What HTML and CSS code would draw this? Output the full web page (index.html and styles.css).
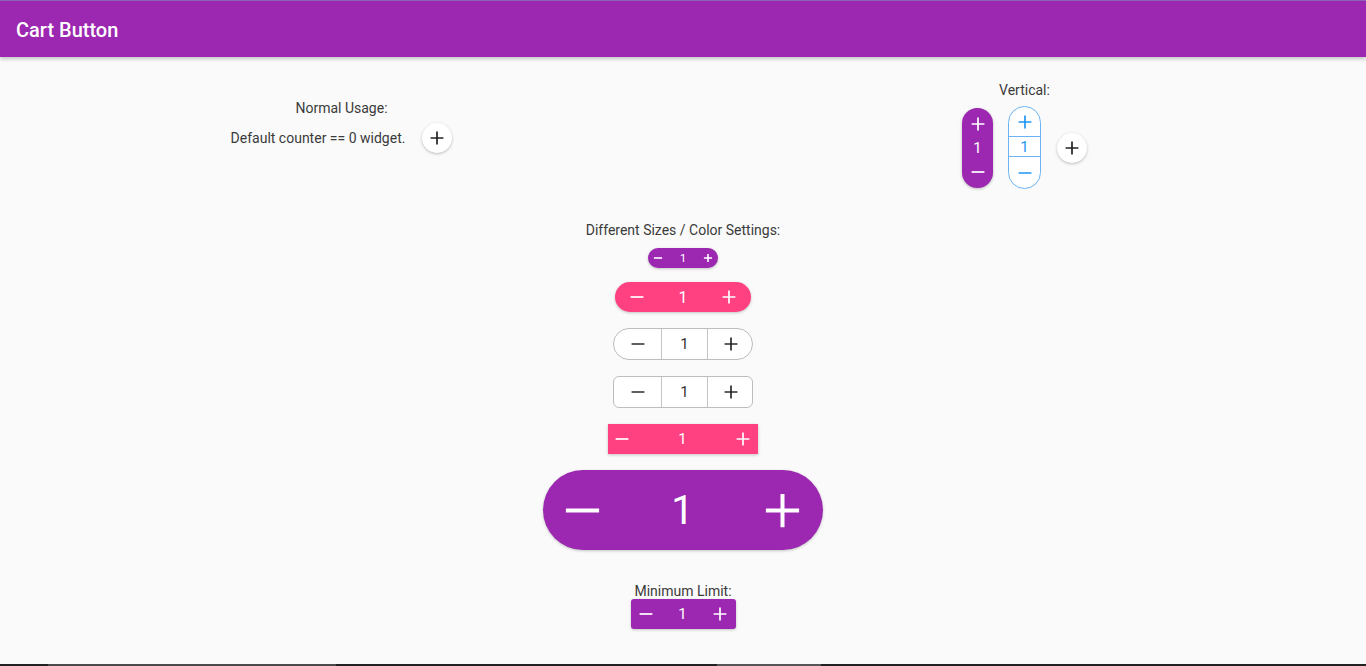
FILE: index.html
```html
<!DOCTYPE html>
<html>
<head>
<meta charset="utf-8">
<link rel="stylesheet" href="styles.css">
</head>
<body>
<div class="app">
  <header class="appbar"><span class="title">Cart Button</span></header>
  <main class="content">
    <section class="top-row">
      <div class="col col-left">
        <div class="label">Normal Usage:</div>
        <div class="normal-row">
          <span class="label">Default counter == 0 widget.</span>
          <button class="fab-add"><svg class="ic ic-md" viewBox="0 0 24 24"><path d="M5 12h14M12 5v14"/></svg></button>
        </div>
      </div>
      <div class="col col-right">
        <div class="label">Vertical:</div>
        <div class="vertical-row">
          <div class="vcounter vc-purple">
            <svg class="ic ic-md" viewBox="0 0 24 24"><path d="M5 12h14M12 5v14"/></svg>
            <span class="num">1</span>
            <svg class="ic ic-md" viewBox="0 0 24 24"><path d="M5 12h14"/></svg>
          </div>
          <div class="vcounter vc-outline">
            <div class="vcell vcell-top"><svg class="ic ic-md" viewBox="0 0 24 24"><path d="M5 12h14M12 5v14"/></svg></div>
            <div class="vcell vcell-mid"><span class="num">1</span></div>
            <div class="vcell vcell-bot"><svg class="ic ic-md" viewBox="0 0 24 24"><path d="M5 12h14"/></svg></div>
          </div>
          <button class="fab-add"><svg class="ic ic-md" viewBox="0 0 24 24"><path d="M5 12h14M12 5v14"/></svg></button>
        </div>
      </div>
    </section>

    <section class="sizes">
      <div class="label">Different Sizes / Color Settings:</div>

      <div class="counter c-small">
        <svg class="ic ic-xs" viewBox="0 0 24 24"><path d="M5 12h14"/></svg>
        <span class="num">1</span>
        <svg class="ic ic-xs" viewBox="0 0 24 24"><path d="M5 12h14M12 5v14"/></svg>
      </div>

      <div class="counter c-pink-pill">
        <svg class="ic ic-md" viewBox="0 0 24 24"><path d="M5 12h14"/></svg>
        <span class="num">1</span>
        <svg class="ic ic-md" viewBox="0 0 24 24"><path d="M5 12h14M12 5v14"/></svg>
      </div>

      <div class="seg c-seg-pill">
        <div class="segcell"><svg class="ic ic-md" viewBox="0 0 24 24"><path d="M5 12h14"/></svg></div>
        <div class="segcell"><span class="num">1</span></div>
        <div class="segcell"><svg class="ic ic-md" viewBox="0 0 24 24"><path d="M5 12h14M12 5v14"/></svg></div>
      </div>

      <div class="seg c-seg-rect">
        <div class="segcell"><svg class="ic ic-md" viewBox="0 0 24 24"><path d="M5 12h14"/></svg></div>
        <div class="segcell"><span class="num">1</span></div>
        <div class="segcell"><svg class="ic ic-md" viewBox="0 0 24 24"><path d="M5 12h14M12 5v14"/></svg></div>
      </div>

      <div class="counter c-pink-rect">
        <svg class="ic ic-md" viewBox="0 0 24 24"><path d="M5 12h14"/></svg>
        <span class="num">1</span>
        <svg class="ic ic-md" viewBox="0 0 24 24"><path d="M5 12h14M12 5v14"/></svg>
      </div>

      <div class="counter c-large">
        <svg class="ic ic-lg" viewBox="0 0 24 24"><path d="M5 12h14"/></svg>
        <span class="num">1</span>
        <svg class="ic ic-lg" viewBox="0 0 24 24"><path d="M5 12h14M12 5v14"/></svg>
      </div>

      <div class="label label-min">Minimum Limit:</div>
      <div class="counter c-min">
        <svg class="ic ic-md" viewBox="0 0 24 24"><path d="M5 12h14"/></svg>
        <span class="num">1</span>
        <svg class="ic ic-md" viewBox="0 0 24 24"><path d="M5 12h14M12 5v14"/></svg>
      </div>
    </section>
  </main>
  <footer class="taskbar"><span class="tb-seg tb-a"></span><span class="tb-seg tb-b"></span></footer>
</div>
</body>
</html>
```

FILE: styles.css
```css
* { box-sizing: border-box; }
html, body { margin: 0; padding: 0; }
body {
  background: #fafafa;
  font-family: Roboto, "Liberation Sans", sans-serif;
  color: #333;
  overflow: hidden;
}
.app {
  height: 666px;
  display: flex;
  flex-direction: column;
}
.appbar {
  height: 57px;
  flex: none;
  background: #9c27b0;
  border-top: 1px solid #8a64b6;
  display: flex;
  align-items: center;
  padding: 0 16px;
  box-shadow: 0 2px 4px rgba(0,0,0,0.22);
  position: relative;
  z-index: 1;
}
.title {
  color: #fff;
  font-size: 20px;
  font-weight: 500;
  margin-top: 2px;
}
.content {
  flex: 1;
}
.label {
  font-size: 14px;
  line-height: 16px;
  color: #3a3a3a;
}
.top-row {
  display: grid;
  grid-template-columns: 1fr 1fr;
}
.col {
  display: flex;
  flex-direction: column;
  align-items: center;
}
.col-left { padding-top: 43px; }
.col-right { padding-top: 25px; }
.normal-row {
  margin-top: 6px;
  height: 32px;
  display: flex;
  align-items: center;
  gap: 17px;
}
.fab-add {
  width: 30px;
  height: 30px;
  border-radius: 50%;
  border: none;
  background: #fff;
  box-shadow: 0 1px 3px rgba(0,0,0,0.25);
  display: flex;
  align-items: center;
  justify-content: center;
  padding: 0;
  color: #222;
}
.ic {
  fill: none;
  stroke: currentColor;
  display: block;
  flex: none;
}
.ic path { vector-effect: non-scaling-stroke; }
.ic-xs { width: 14px; height: 14px; stroke-width: 1.6; }
.ic-md { width: 22px; height: 22px; stroke-width: 1.7; }
.ic-lg { width: 57px; height: 57px; stroke-width: 4; }

.vertical-row {
  margin-top: 8px;
  height: 83px;
  display: flex;
  align-items: center;
}
.vcounter {
  display: flex;
  flex-direction: column;
  align-items: center;
}
.vc-purple {
  width: 31px;
  height: 80px;
  border-radius: 16px;
  background: #9c27b0;
  color: #fff;
  justify-content: space-between;
  padding: 5px 0 5px;
  box-shadow: 0 1px 3px rgba(0,0,0,0.25);
}
.vc-purple .num { font-size: 15px; line-height: 16px; }
.vc-outline {
  margin-left: 15px;
  margin-right: 16px;
  width: 33px;
  height: 83px;
  border: 1px solid #6ab4f3;
  border-radius: 17px;
  background: #fff;
  color: #2196f3;
  overflow: hidden;
}
.vcell {
  width: 100%;
  display: flex;
  align-items: center;
  justify-content: center;
}
.vcell-top { height: 30px; border-bottom: 1px solid #6ab4f3; }
.vcell-mid { height: 20px; border-bottom: 1px solid #6ab4f3; }
.vcell-bot { flex: 1; }
.vc-outline .num { font-size: 15px; line-height: 16px; }

.sizes {
  display: flex;
  flex-direction: column;
  align-items: center;
  padding-top: 33px;
}
.counter {
  display: flex;
  align-items: center;
  justify-content: space-between;
  color: #fff;
  box-shadow: 0 1px 3px rgba(0,0,0,0.22);
}
.num { font-size: 15px; }
.c-small {
  margin-top: 10px;
  width: 70px;
  height: 20px;
  border-radius: 10px;
  background: #9c27b0;
  padding: 0 3px;
}
.c-small .num { font-size: 11px; }
.c-pink-pill {
  margin-top: 14px;
  width: 136px;
  height: 30px;
  border-radius: 15px;
  background: #ff4081;
  padding: 0 11px;
}
.c-pink-pill .num { font-size: 16px; }
.seg {
  display: grid;
  grid-template-columns: 47px 46px 47px;
  width: 140px;
  height: 32px;
  border: 1px solid #bdbdbd;
  background: #fff;
  color: #2a2a2a;
  overflow: hidden;
}
.segcell {
  display: flex;
  align-items: center;
  justify-content: center;
}
.segcell + .segcell { border-left: 1px solid #c4c4c4; }
.c-seg-pill { margin-top: 16px; border-radius: 16px; }
.c-seg-rect { margin-top: 16px; border-radius: 6px; }
.seg .num { font-size: 15px; color: #333; }
.c-pink-rect {
  margin-top: 16px;
  width: 150px;
  height: 30px;
  background: #ff4081;
  padding: 0 4px 0 3px;
}
.c-large {
  margin-top: 16px;
  width: 280px;
  height: 80px;
  border-radius: 40px;
  background: #9c27b0;
  padding: 0 12px 0 11px;
}
.c-large .num { font-size: 40px; font-weight: 400; }
.label-min { margin-top: 33px; }
.c-min {
  width: 105px;
  height: 30px;
  border-radius: 3px;
  background: #9c27b0;
  padding: 0 5px 0 4px;
}
.taskbar {
  height: 2px;
  flex: none;
  background: #222;
  position: relative;
}
.tb-seg { position: absolute; top: 0; height: 2px; }
.tb-a { left: 48px; width: 288px; background: #4a4a4a; }
.tb-b { left: 717px; width: 104px; background: #555; }
```
